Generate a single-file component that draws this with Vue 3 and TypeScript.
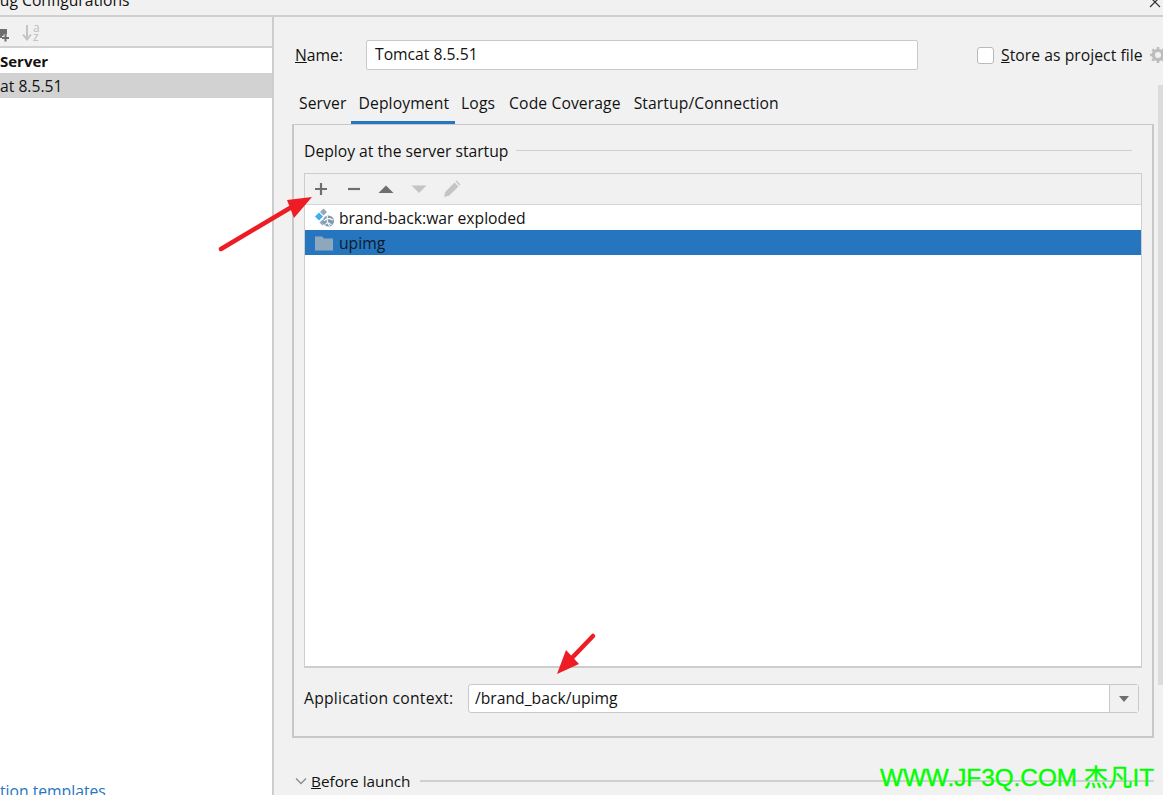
<script setup lang="ts">
const tabs: string[] = ['Server', 'Deployment', 'Logs', 'Code Coverage', 'Startup/Connection']
</script>

<template>
  <div class="window">
    <header class="titlebar">
      <span class="title">Debug Configurations</span>
      <svg class="close" width="14" height="14" viewBox="0 0 14 14"><path d="M1 -3L11 7M11 -3L1 7" stroke="#333" stroke-width="1.2" fill="none" /></svg>
    </header>
    <div class="body">
      <aside class="side">
        <div class="side-tools">
          <svg class="ic-add" width="14" height="20" viewBox="0 0 14 20">
            <rect x="-4" y="7" width="11" height="9" fill="#6e6e6e" />
            <path d="M2 16h7M5.500 12.500v7" stroke="#f1f1f1" stroke-width="4" fill="none" />
            <path d="M2 16h7M5.500 12.500v7" stroke="#6e6e6e" stroke-width="2" fill="none" />
          </svg>
          <svg class="ic-sort" width="20" height="24" viewBox="0 0 20 24">
            <path d="M5 5v14M1 14.500L5 19.500l4-5" stroke="#c4c4c4" stroke-width="2" fill="none" />
            <text x="11" y="12" class="az">a</text>
            <text x="11" y="21" class="az">z</text>
          </svg>
        </div>
        <ul class="tree">
          <li class="tree-group">Server</li>
          <li class="tree-sel">at 8.5.51</li>
        </ul>
        <a class="templates">tion templates</a>
      </aside>

      <main class="main">
        <div class="name-row">
          <label class="name-label"><u>N</u>ame:</label>
          <div class="name-input">Tomcat 8.5.51</div>
          <span class="check"></span>
          <span class="store"><u>S</u>tore as project file</span>
          <svg class="gear" width="16" height="16" viewBox="0 0 16 16">
            <circle cx="8" cy="8" r="4.600" fill="none" stroke="#bdbdbd" stroke-width="3.200" />
            <path d="M8 0v16M0 8h16M2.300 2.300l11.400 11.400M13.700 2.300L2.300 13.700" stroke="#bdbdbd" stroke-width="2.600" stroke-dasharray="3 10 3 0" />
          </svg>
        </div>

        <nav class="tabs">
          <span v-for="t in tabs" :key="t" class="tab" :class="{ active: t === 'Deployment' }">{{ t }}</span>
        </nav>

        <section class="panel">
          <div class="legend">
            <span>Deploy at the server startup</span>
            <i class="rule"></i>
          </div>
          <div class="table">
            <div class="table-tools">
              <svg width="16" height="16" viewBox="0 0 16 16"><path d="M2 8h12M8 2v12" stroke="#6e6e6e" stroke-width="2.200" /></svg>
              <svg width="16" height="16" viewBox="0 0 16 16"><path d="M2 8h12" stroke="#6e6e6e" stroke-width="2.200" /></svg>
              <svg width="16" height="16" viewBox="0 0 16 16"><path d="M0.500 12L8 4.500L15.500 12z" fill="#6e6e6e" /></svg>
              <svg width="16" height="16" viewBox="0 0 16 16"><path d="M0.500 4.500L8 12L15.500 4.500z" fill="#c4c4c4" /></svg>
              <svg width="18" height="18" viewBox="0 0 18 18"><path d="M1 17l1.200-5L11.500 2.500l4 4L6 15.800zM12.500 1.500l1-1 4 4-1 1z" fill="#c4c4c4" /></svg>
            </div>
            <div class="row">
              <svg class="row-ic" width="20" height="19" viewBox="0 0 20 19">
                <path d="M5 4.500l4 4-4 4-4-4z" fill="#3fb0ec" />
                <path d="M9.500 0.500l3.500 3.500-3.500 3.500-3.500-3.500z" fill="#93a9b9" />
                <path d="M8.500 11.500l3 3-3 3-3-3z" fill="#93a9b9" />
                <circle cx="14.500" cy="13" r="5.500" fill="#7f9bb0" />
                <path d="M10 13c2-3 5-3 9-1M11.500 16.500c1-2 3-3 6 .5M13.500 8c-1 3 0 7 2 10" stroke="#fff" stroke-width="1.100" fill="none" />
              </svg>
              <span>brand-back:war exploded</span>
            </div>
            <div class="row selected">
              <svg class="row-ic" width="20" height="16" viewBox="0 0 20 16">
                <path d="M1 1.500h7l2 2h9v12H1z" fill="#8fa7bd" />
              </svg>
              <span>upimg</span>
            </div>
            <div class="table-fill"></div>
          </div>
          <div class="context">
            <label>Application context:</label>
            <div class="combo">
              <div class="combo-value">/brand_back/upimg</div>
              <div class="combo-btn"><i class="caret"></i></div>
            </div>
          </div>
        </section>

        <div class="before">
          <svg width="12" height="8" viewBox="0 0 12 8"><path d="M1 1.500L6 6.500L11 1.500" stroke="#8c8c8c" stroke-width="1.300" fill="none" /></svg>
          <span class="before-text"><u>B</u>efore launch</span>
          <i class="rule dark"></i>
        </div>
      </main>
      <div class="scrollbar"><i></i></div>
    </div>

    <svg class="arrows" width="1163" height="795" viewBox="0 0 1163 795">
      <path d="M221 249L290 208" stroke="#ee1c25" stroke-width="4.500" stroke-linecap="round" />
      <path d="M312 197L294 218L287 200z" fill="#ee1c25" />
      <path d="M593 636L569 661" stroke="#ee1c25" stroke-width="4.500" stroke-linecap="round" />
      <path d="M557 674L566 650L579 664z" fill="#ee1c25" />
    </svg>
    <div class="watermark">WWW.JF3Q.COM 杰凡IT</div>
  </div>
</template>

<style>
html, body { margin: 0; padding: 0; background: #f1f1f1; }
</style>

<style scoped>
.window {
  position: relative;
  width: 1163px;
  height: 795px;
  overflow: hidden;
  background: #f1f1f1;
  color: #121212;
  font-family: "Open Sans", "Noto Sans", sans-serif;
  font-size: 15.7px;
  display: flex;
  flex-direction: column;
}
.titlebar {
  height: 15px;
  flex: none;
  border-bottom: 2px solid #cfcfcf;
  overflow: hidden;
  display: flex;
  justify-content: space-between;
  align-items: flex-end;
  box-sizing: content-box;
}
.title { margin-left: -30px; line-height: 20px; margin-bottom: 5px; flex: none; }
.close { align-self: flex-start; flex: none; }
.body { flex: 1; display: flex; min-height: 0; }
.side {
  width: 272px;
  flex: none;
  border-right: 2px solid #cdcdcd;
  display: flex;
  flex-direction: column;
  background: #fff;
}
.side-tools {
  height: 29px;
  background: #f1f1f1;
  border-bottom: 2px solid #d2d2d2;
  display: flex;
  align-items: center;
  gap: 8px;
  flex: none;
}
.ic-add { flex: none; overflow: visible; }
.ic-sort { flex: none; }
.az { font-size: 12px; fill: #bdbdbd; font-family: "Open Sans", sans-serif; }
.tree { list-style: none; margin: 0; padding: 0; flex: 1; }
.tree-group { height: 25px; line-height: 26px; font-weight: 700; font-size: 15px; }
.tree-sel { height: 25px; line-height: 27px; background: #d2d2d2; }
.templates { color: #2675bf; line-height: 20px; height: 14px; overflow: visible; white-space: nowrap; }
.main {
  width: 862px;
  flex: none;
  margin-left: 18px;
  display: flex;
  flex-direction: column;
}
.name-row { height: 30px; margin-top: 23px; display: flex; align-items: center; flex: none; }
.name-label { margin-left: 3px; width: 71px; flex: none; }
.name-input {
  width: 552px;
  height: 30px;
  flex: none;
  line-height: 27px;
  border: 1px solid #c9c9c9;
  border-radius: 2px;
  background: #fff;
  padding-left: 8px;
  box-sizing: border-box;
}
.check {
  width: 15px;
  height: 15px;
  margin-left: 59px;
  border: 1px solid #b9b9b9;
  border-radius: 3px;
  background: #fff;
  flex: none;
}
.store { margin-left: 7px; white-space: nowrap; flex: none; letter-spacing: 0.050px; }
.gear { margin-left: 7px; flex: none; }
.tabs { height: 34px; margin-top: 20px; display: flex; flex: none; }
.tab { padding: 0 6px 0 7px; height: 31px; line-height: 27px; white-space: nowrap; flex: none; letter-spacing: 0.100px; }
.tab:nth-child(1) { padding-right: 5px; }
.tab:nth-child(3) { padding: 0 7px 0 6px; }
.tab.active { border-bottom: 3px solid #2675bf; }
.panel {
  height: 614px;
  flex: none;
  box-sizing: border-box;
  border: 2px solid #c8c8c8;
  border-top-width: 1px;
  padding: 0 10px;
  display: flex;
  flex-direction: column;
}
.legend { height: 48px; flex: none; display: flex; align-items: center; gap: 8px; padding-right: 10px; padding-top: 3px; box-sizing: border-box; }
.rule { flex: 1; height: 1px; background: #d0d0d0; display: block; }
.table {
  height: 495px;
  flex: none;
  box-sizing: border-box;
  border: 1px solid #cdcdcd;
  border-bottom-width: 2px;
  display: flex;
  flex-direction: column;
  background: #fff;
}
.table-tools {
  height: 31px;
  background: #f1f1f1;
  border-bottom: 1px solid #d6d6d6;
  display: flex;
  align-items: center;
  gap: 16.500px;
  padding-left: 8px;
  padding-bottom: 1px;
  box-sizing: border-box;
  flex: none;
}
.row { height: 25px; display: flex; align-items: center; flex: none; }
.row-ic { margin-left: 9px; width: 20px; flex: none; margin-right: 5px; }
.selected { background: #2675bf; color: #0d1a2a; }
.table-fill { flex: 1; }
.context { display: flex; align-items: center; height: 29px; margin-top: 16px; flex: none; }
.context label { width: 164px; flex: none; letter-spacing: 0.220px; margin-bottom: 1px; }
.combo {
  width: 671px;
  height: 29px;
  box-sizing: border-box;
  border: 1px solid #c9c9c9;
  border-radius: 3px;
  background: #fff;
  display: flex;
}
.combo-value { flex: 1; padding-left: 6px; line-height: 26px; }
.combo-btn {
  width: 28px;
  background: #f1f1f1;
  border-left: 1px solid #c9c9c9;
  display: flex;
  align-items: center;
  justify-content: center;
}
.caret { width: 0; height: 0; border-left: 5px solid transparent; border-right: 5px solid transparent; border-top: 6px solid #6e6e6e; }
.before { display: flex; align-items: center; height: 20px; margin-top: 33px; flex: none; }
.before svg { margin-left: 3px; flex: none; }
.before-text { margin-left: 4px; white-space: nowrap; margin-right: 10px; flex: none; font-size: 15.300px; }
.rule.dark { background: #cfcfcf; height: 2px; }
.scrollbar { width: 9px; flex: none; margin-left: 2px; padding-top: 68px; }
.scrollbar i { display: block; width: 5px; margin-left: 2px; height: 600px; background: #dcdcdc; }
.arrows { position: absolute; left: 0; top: 0; pointer-events: none; }
.watermark {
  position: absolute;
  left: 880px;
  top: 764px;
  color: #00ff00;
  font-family: "Liberation Sans", "Noto Sans CJK SC", sans-serif;
  font-size: 24.300px;
  line-height: 28px;
  white-space: nowrap;
  -webkit-text-stroke: 0.4px #00ff00;
}
</style>
